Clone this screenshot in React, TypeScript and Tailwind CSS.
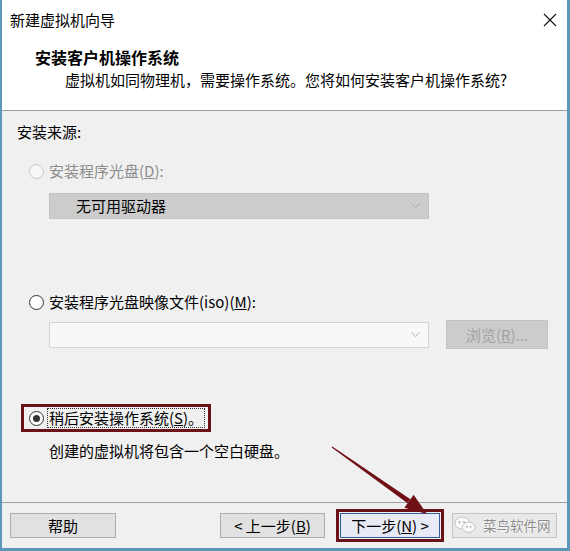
import React from "react";

const font = {
  fontFamily: '"Noto Sans CJK SC", "Noto Sans", "Liberation Sans", sans-serif',
};

const Radio = ({ state }: { state: "disabled" | "off" | "on" }) => {
  const ring =
    state === "disabled"
      ? "border-[#c8c8c8] bg-[#f7f7f7]"
      : "border-[#333333] bg-white";
  return (
    <span
      className={`flex h-[15px] w-[15px] shrink-0 items-center justify-center rounded-full border ${ring}`}
    >
      {state === "on" && (
        <span className="h-[7px] w-[7px] rounded-full bg-[#333333]" />
      )}
    </span>
  );
};

const Chevron = ({ color }: { color: string }) => (
  <svg width="9" height="6" viewBox="0 0 9 6" fill="none">
    <path d="M0.5 0.5 L4.5 4.5 L8.5 0.5" stroke={color} strokeWidth="1" />
  </svg>
);

export default function App() {
  return (
    <div
      className="relative flex h-[551px] w-[570px] flex-col overflow-hidden border-b-[3px] border-l-2 border-r-[3px] border-[#5b97b8] bg-white text-[15px] leading-[20px] text-black"
      style={font}
    >
      {/* Title bar */}
      <div className="flex h-[40px] items-center justify-between pl-[8px] pr-[10px]">
        <span>新建虚拟机向导</span>
        <svg width="14" height="14" viewBox="0 0 14 14">
          <path d="M1 1 L13 13 M13 1 L1 13" stroke="#111" strokeWidth="1.1" />
        </svg>
      </div>

      {/* Header */}
      <div className="h-[70px] pt-[7px]">
        <div className="pl-[33px] text-[16px] font-bold">安装客户机操作系统</div>
        <div className="mt-[3px] pl-[63px]">
          虚拟机如同物理机，需要操作系统。您将如何安装客户机操作系统?
        </div>
      </div>
      <div className="h-px bg-[#a0a0a0]" />

      {/* Body */}
      <div className="flex flex-1 flex-col bg-[#f0f0f0] pt-[11px]">
        <div className="pl-[15px]">安装来源:</div>

        <div className="ml-[27px] mt-[19px] flex h-[20px] items-center">
          <Radio state="disabled" />
          <span className="ml-[5px] text-[#8c8c8c]">
            安装程序光盘(<span className="underline">D</span>):
          </span>
        </div>

        <div className="ml-[47px] mt-[12px] flex h-[26px] w-[380px] items-center justify-between border border-[#c4c4c4] bg-[#cccccc] pl-[26px] pr-[8px]">
          <span>无可用驱动器</span>
          <Chevron color="#a8a8a8" />
        </div>

        <div className="ml-[27px] mt-[73px] flex h-[20px] items-center">
          <Radio state="off" />
          <span className="ml-[5px]">
            安装程序光盘映像文件(iso)(<span className="underline">M</span>):
          </span>
        </div>

        <div className="ml-[47px] mt-[8px] flex items-center">
          <div className="flex h-[26px] w-[380px] items-center justify-end border border-[#d4d4d4] bg-[#f8f8f8] pr-[8px]">
            <Chevron color="#b0b0b0" />
          </div>
          <div className="ml-[17px] flex h-[29px] w-[102px] items-center justify-center border border-[#c2c2c2] bg-[#cccccc] text-[#a3a3a3]">
            浏览(<span className="underline">R</span>)...
          </div>
        </div>

        <div className="ml-[19px] mt-[55px] flex h-[28px] w-fit items-center whitespace-nowrap border-[3px] border-[#6b1118] pl-[5px] pr-[3px]">
          <Radio state="on" />
          <span className="ml-[3px] border border-dotted border-[#333] px-[1px] leading-[18px]">
            稍后安装操作系统(<span className="underline">S</span>)。
          </span>
        </div>

        <div className="ml-[47px] mt-[9px]">创建的虚拟机将包含一个空白硬盘。</div>
      </div>

      <div className="h-px bg-[#a0a0a0]" />

      {/* Footer */}
      <div className="flex h-[45px] items-center bg-[#f0f0f0]">
        <button className="ml-[8px] flex h-[25px] w-[106px] items-center justify-center border border-[#adadad] bg-[#e1e1e1]">
          帮助
        </button>
        <button className="ml-[104px] flex h-[25px] w-[105px] items-center justify-center border border-[#adadad] bg-[#e1e1e1]">
          &lt; 上一步(<span className="underline">B</span>)
        </button>
        <div className="ml-[11px] border-[3px] border-[#6b1118] p-[1px]">
          <button className="flex h-[25px] w-[100px] items-center justify-center border border-[#2f5f9e] bg-[#e8eaf6]">
            下一步(<span className="underline">N</span>) &gt;
          </button>
        </div>
        <div className="relative ml-[8px] flex h-[25px] w-[105px] items-center border border-[#c4c4c4] bg-[#e8e8e8]">
          {/* watermark sits over the cancel button */}
          <div className="absolute left-[1px] top-[1px] flex items-center gap-[7px] whitespace-nowrap text-[#8a8a8a] [text-shadow:0_0_2px_#fff,0_0_2px_#fff]">
            <svg width="22" height="20" viewBox="0 0 24 20" fill="#fafafa" stroke="#bdbdbd" strokeWidth="1">
              <ellipse cx="9" cy="8" rx="8" ry="6.5" />
              <ellipse cx="16" cy="12.5" rx="7" ry="5.5" />
              <circle cx="6" cy="7" r="0.9" fill="#bdbdbd" />
              <circle cx="11" cy="7" r="0.9" fill="#bdbdbd" />
              <circle cx="14" cy="12" r="0.8" fill="#bdbdbd" />
              <circle cx="18" cy="12" r="0.8" fill="#bdbdbd" />
            </svg>
            <span className="text-[13.5px]">菜鸟软件网</span>
          </div>
        </div>
      </div>

      {/* Arrow annotation */}
      <svg
        className="pointer-events-none absolute left-0 top-0"
        width="570"
        height="551"
        viewBox="0 0 570 551"
      >
        <polygon
          points="329.7,447.4 330.3,446.6 408.4,499.3 405.6,503.3"
          fill="#6e1016"
        />
        <polygon points="425,514 402.4,507.8 411.6,494.8" fill="#6e1016" />
      </svg>
    </div>
  );
}
